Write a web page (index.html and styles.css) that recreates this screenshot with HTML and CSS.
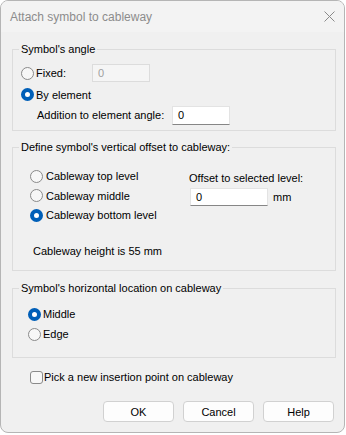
FILE: index.html
```html
<!DOCTYPE html>
<html>
<head>
    <meta charset="UTF-8">
    <title>Attach symbol to cableway</title>
    <link rel="stylesheet" href="styles.css">
</head>
<body>
    <div class="window">
        <div class="titlebar">
            <span class="title">Attach symbol to cableway</span>
            <svg class="close" width="11" height="11" viewBox="0 0 11 11"><path d="M0.5 0.5L10.5 10.5M10.5 0.5L0.5 10.5" stroke="#8a8a8a" stroke-width="1" fill="none"/></svg>
        </div>
        <div class="content">
            <fieldset class="group">
                <legend>Symbol's angle</legend>
                <div class="angle">
                    <div class="row r22">
                        <span class="radio"></span><span class="fixed-label">Fixed:</span>
                        <span class="field disabled w58">0</span>
                    </div>
                    <div class="row r21">
                        <span class="radio checked"></span><span>By element</span>
                    </div>
                    <div class="row r20 indent">
                        <span class="add-label">Addition to element angle:</span>
                        <span class="field w58">0</span>
                    </div>
                </div>
            </fieldset>

            <fieldset class="group second">
                <legend>Define symbol's vertical offset to cableway:</legend>
                <div class="offset">
                    <div class="cols">
                        <div class="levels">
                            <div class="row r20"><span class="radio"></span><span class="gap3">Cableway top level</span></div>
                            <div class="row r19"><span class="radio"></span><span class="gap3">Cableway middle</span></div>
                            <div class="row r20"><span class="radio checked"></span><span class="gap3">Cableway bottom level</span></div>
                        </div>
                        <div class="amount">
                            <div class="amount-label">Offset to selected level:</div>
                            <div class="amount-row">
                                <span class="field w78">0</span><span class="unit">mm</span>
                            </div>
                        </div>
                    </div>
                    <div class="note">Cableway height is 55 mm</div>
                </div>
            </fieldset>

            <fieldset class="group">
                <legend>Symbol's horizontal location on cableway</legend>
                <div class="location">
                    <div class="row r20"><span class="radio checked"></span><span>Middle</span></div>
                    <div class="row r20"><span class="radio"></span><span>Edge</span></div>
                </div>
            </fieldset>

            <div class="row r20 pick">
                <span class="check"></span><span class="gap3">Pick a new insertion point on cableway</span>
            </div>

            <div class="buttons">
                <span class="button">OK</span>
                <span class="button">Cancel</span>
                <span class="button">Help</span>
            </div>
        </div>
    </div>
</body>
</html>
```
FILE: styles.css
```css
*{
    box-sizing:border-box;
}
body{
    margin:0;
    background:#fff;
    font-family:"Liberation Sans",Arial,sans-serif;
    font-size:11px;
    color:#000;
}
.window{
    width:345px;
    height:433px;
    border:1px solid #b5b5b5;
    border-radius:8px;
    background:#f0f0f0;
    overflow:hidden;
}
.titlebar{
    height:31px;
    background:#f3f3f3;
    display:flex;
    align-items:center;
    justify-content:space-between;
    padding:0 9px;
}
.title{
    font-size:12px;
    color:#8c8c8c;
}
.content{
    padding:0 8px 0 11px;
}
.group{
    margin:9px 0 0;
    padding:0;
    border:1px solid #dcdcdc;
    min-width:0;
}
.group.second{
    margin-top:8px;
}
.group legend{
    margin-left:6px;
    padding:0 2px;
    line-height:16px;
}
.row{
    display:flex;
    align-items:center;
}
.r22{ height:22px; }
.r21{ height:21px; }
.r20{ height:20px; }
.r19{ height:19px; }
.radio{
    width:13px;
    height:13px;
    flex:none;
    border-radius:50%;
    border:1px solid #8a8a8a;
    background:#f7f7f7;
    margin-right:2px;
}
.radio.checked{
    border:4px solid #005fb8;
    background:#fff;
}
.check{
    width:13px;
    height:13px;
    flex:none;
    border-radius:3px;
    border:1px solid #8a8a8a;
    background:#f7f7f7;
}
.gap3{
    margin-left:1px;
}
.field{
    height:19px;
    border:1px solid #e3e3e3;
    border-bottom-color:#868686;
    background:#fff;
    padding-left:5px;
    display:flex;
    align-items:center;
}
.field.disabled{
    height:18px;
    background:#f5f5f5;
    border-color:#dcdcdc;
    color:#a0a0a0;
}
.w58{ width:58px; }
.w78{ width:78px; }

/* symbol's angle */
.angle{
    padding:5px 0 5px 8px;
}
.fixed-label{
    width:56px;
}
.indent{
    padding-left:16px;
}
.add-label{
    width:135px;
}

/* vertical offset */
.offset{
    padding:11px 0 11px;
}
.cols{
    display:flex;
}
.levels{
    width:176px;
    padding-left:17px;
}
.amount{
    padding-top:4px;
}
.amount-label{
    line-height:16px;
}
.amount-row{
    display:flex;
    align-items:center;
    margin:2px 0 0 1px;
}
.amount-row .field{
    height:18px;
}
.unit{
    margin-left:5px;
}
.note{
    margin-top:18px;
    padding-left:20px;
    line-height:16px;
}

/* horizontal location */
.location{
    padding:8px 0 13px 15px;
}

.pick{
    margin:9px 0 0 18px;
}
.buttons{
    display:flex;
    justify-content:flex-end;
    gap:9px;
    margin:14px 2px 0 0;
}
.button{
    width:71px;
    height:21px;
    display:flex;
    align-items:center;
    justify-content:center;
    background:#fdfdfd;
    border:1px solid #d1d1d1;
    border-radius:4px;
}
```
